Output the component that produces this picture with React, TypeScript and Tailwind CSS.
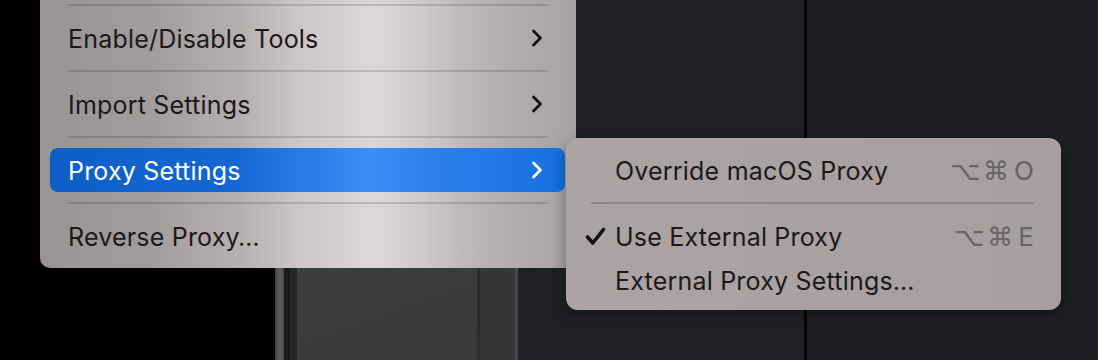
import type { ReactNode } from "react";

const FONT = "font-['Inter','Noto_Sans',sans-serif]";

function Chevron({ white }: { white?: boolean }) {
  return (
    <svg width="12" height="18" viewBox="0 0 12 18" className="shrink-0">
      <polyline
        points="2.5,2 9.5,9 2.5,16"
        fill="none"
        stroke={white ? "#ffffff" : "#111111"}
        strokeWidth="2.8"
        strokeLinecap="round"
        strokeLinejoin="round"
      />
    </svg>
  );
}

function Check() {
  return (
    <svg width="21" height="19" viewBox="0 0 21 19">
      <path
        d="M2.5 10 L7.8 16 L18.5 2.5"
        fill="none"
        stroke="#111111"
        strokeWidth="3.6"
        strokeLinecap="round"
        strokeLinejoin="round"
      />
    </svg>
  );
}

function MainSep() {
  return (
    <div className="h-[22px] flex items-center px-[28px]">
      <div className="h-[2px] w-full bg-black/15" />
    </div>
  );
}

function MainItem({ label, arrow, active }: { label: string; arrow?: boolean; active?: boolean }) {
  return (
    <div
      className={
        "h-[44px] mx-[10px] mr-[11px] flex items-center justify-between pl-[18px] pr-[22px] rounded-[8px] " +
        (active
          ? "text-white bg-[linear-gradient(to_right,#0e5ec6_0%,#1467d3_35%,#3a8ef6_62%,#2b7fed_76%,#1570e0_100%)]"
          : "text-[#1c191a]")
      }
    >
      <span className="text-[25px] tracking-[0.2px] leading-none pt-[3px]">{label}</span>
      {arrow && <Chevron white={active} />}
    </div>
  );
}

function SubItem({ label, check, keys }: { label: string; check?: boolean; keys?: string[] }) {
  return (
    <div className="h-[44px] flex items-center pr-[27px]">
      <div className="w-[49px] flex justify-end pr-[9px]">{check && <Check />}</div>
      <span className="flex-1 text-[25px] text-[#1c191a] tracking-[0.2px] leading-none pt-[3px]">{label}</span>
      {keys && (
        <div className="flex items-center gap-[3px] text-[26px] leading-none text-[#6a6264] font-['DejaVu_Sans','Inter',sans-serif] pt-[2px]">
          {keys.map((k, i) => (
            <span key={i} className={i === 2 ? "font-['Inter',sans-serif] ml-[2px]" : ""}>
              {k}
            </span>
          ))}
        </div>
      )}
    </div>
  );
}

function Col({ className, children }: { className: string; children?: ReactNode }) {
  return <div className={"h-full shrink-0 " + className}>{children}</div>;
}

export default function App() {
  return (
    <div className={"relative w-[1098px] h-[360px] overflow-hidden bg-black " + FONT}>
      {/* windows behind the menus */}
      <div className="flex h-full">
        <Col className="w-[275px] bg-black" />
        <Col className="w-[9px] bg-[linear-gradient(to_right,#444,#5e5e5e,#4a4a4a)]" />
        <Col className="w-[6px] bg-[#1a1a1a]" />
        <Col className="w-[7px] bg-[#262627]" />
        <Col className="w-[180px] bg-[linear-gradient(160deg,#38393b,#3d3e40_60%,#38393b)]" />
        <Col className="w-[3px] bg-[#2a2b2d]" />
        <Col className="w-[35px] bg-[#353638]" />
        <Col className="w-[3px] bg-[#46474a]" />
        <Col className="w-[286px] bg-[#1f2023]" />
        <Col className="w-[3px] bg-black" />
        <Col className="flex-1 bg-[#1e1f22]" />
      </div>

      {/* main menu */}
      <div className="absolute left-[40px] top-[-6px] w-[536px] pb-[10px] rounded-b-[10px] bg-[linear-gradient(to_right,#9a9394_0%,#a19b9b_20%,#b5afaf_37%,#cdc7c8_49%,#dcd6d8_62%,#d0cacb_71%,#b9b3b4_82%,#a7a1a2_100%)]">
        <MainSep />
        <MainItem label="Enable/Disable Tools" arrow />
        <MainSep />
        <MainItem label="Import Settings" arrow />
        <MainSep />
        <MainItem label="Proxy Settings" arrow active />
        <MainSep />
        <MainItem label="Reverse Proxy…" />
      </div>

      {/* submenu */}
      <div className="absolute left-[566px] top-[138px] w-[495px] pt-[10px] pb-[8px] rounded-[12px] bg-[linear-gradient(to_right,#aba3a4,#a69e9f)] shadow-[0_4px_14px_rgba(0,0,0,0.35)]">
        <SubItem label="Override macOS Proxy" keys={["⌥", "⌘", "O"]} />
        <div className="h-[22px] flex items-center pl-[25px] pr-[27px]">
          <div className="h-[2px] w-full bg-[#8c8485]" />
        </div>
        <SubItem label="Use External Proxy" check keys={["⌥", "⌘", "E"]} />
        <SubItem label="External Proxy Settings…" />
      </div>
    </div>
  );
}
